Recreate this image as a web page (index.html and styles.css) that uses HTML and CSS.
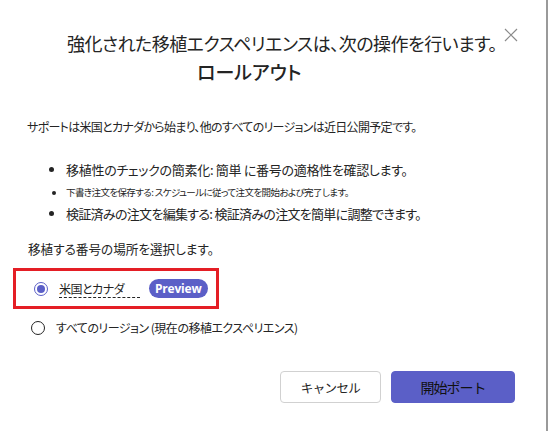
FILE: index.html
```html
<!DOCTYPE html>
<html lang="ja">
<head>
    <meta charset="utf-8" />
    <title>ロールアウト</title>
    <link rel="stylesheet" href="styles.css">
</head>
<body>
    <div class="dialog">
        <button class="close" aria-label="閉じる">
            <svg width="14" height="14" viewBox="0 0 14 14">
                <path d="M1 1 L13 13 M13 1 L1 13" stroke="#8a8a8a" stroke-width="1.2" fill="none" />
            </svg>
        </button>

        <h1 class="title">
            <span class="title-line">強化された移植エクスペリエンスは、次の操作を行います。</span>
            <span class="title-line title-line-2">ロールアウト</span>
        </h1>

        <p class="intro">サポートは米国とカナダから始まり、他のすべてのリージョンは近日公開予定です。</p>

        <ul class="features">
            <li class="large">移植性のチェックの簡素化: 簡単 に番号の適格性を確認します。</li>
            <li class="small">下書き注文を保存する: スケジュールに従って注文を開始および完了します。</li>
            <li class="medium">検証済みの注文を編集する: 検証済みの注文を簡単に調整できます。</li>
        </ul>

        <p class="prompt">移植する番号の場所を選択します。</p>

        <div class="options">
            <label class="option option-highlight">
                <span class="radio radio-checked"></span>
                <span class="option-label dashed">米国とカナダ</span>
                <span class="badge">Preview</span>
            </label>
            <label class="option">
                <span class="radio"></span>
                <span class="option-label">すべてのリージョン (現在の移植エクスペリエンス)</span>
            </label>
        </div>

        <div class="actions">
            <button class="btn">キャンセル</button>
            <button class="btn btn-primary">開始ポート</button>
        </div>
    </div>
</body>
</html>
```

FILE: styles.css
```css
body {
    margin: 0;
    background-color: #fff;
    font-family: "Noto Sans CJK JP", sans-serif;
    font-feature-settings: "palt";
    color: #242424;
}

.dialog {
    position: relative;
    width: 546px;
    height: 431px;
    border-right: 2px solid #9a9a9a;
    box-sizing: content-box;
}

.close {
    position: absolute;
    top: 28px;
    left: 504px;
    padding: 0;
    border: none;
    background: none;
    width: 14px;
    height: 14px;
}

.title {
    margin: 0;
    padding-top: 29px;
    font-weight: normal;
    display: flex;
    flex-direction: column;
}

.title-line {
    font-size: 18px;
    letter-spacing: -0.5px;
    line-height: 28px;
    padding-left: 67px;
}

.title-line-2 {
    padding-left: 197px;
    font-size: 19px;
    font-weight: 500;
    letter-spacing: 0;
    line-height: 30px;
}

.intro {
    margin: 30px 0 0 27px;
    font-size: 12px;
    letter-spacing: -0.7px;
    line-height: 20px;
}

.features {
    margin: 22px 0 0 0;
    padding: 0 0 0 66px;
}

.features li {
    line-height: 22px;
}

.features li.large {
    font-size: 13px;
    letter-spacing: -0.3px;
}

.features li.small {
    font-size: 9.5px;
    letter-spacing: -0.6px;
}

.features li.medium {
    font-size: 13px;
    letter-spacing: -0.7px;
}

.prompt {
    margin: 14px 0 0 28px;
    font-size: 12.6px;
    line-height: 20px;
}

.options {
    display: flex;
    flex-direction: column;
    margin-top: 10px;
}

.option {
    display: flex;
    align-items: center;
    gap: 11px;
    font-size: 12px;
    letter-spacing: -0.5px;
    height: 38px;
    padding-left: 31px;
}

.option-highlight {
    width: 206px;
    height: 41px;
    margin-top: -1px;
    margin-left: 13px;
    padding-left: 18px;
    border: 3.5px solid #e41e25;
    box-sizing: border-box;
}

.radio {
    width: 14px;
    height: 14px;
    border: 1px solid #242424;
    border-radius: 50%;
    box-sizing: border-box;
    flex-shrink: 0;
    position: relative;
}

.radio-checked {
    border-color: #5b5fc7;
}

.radio-checked::after {
    content: '';
    position: absolute;
    left: 2px;
    top: 2px;
    width: 8px;
    height: 8px;
    border-radius: 50%;
    background-color: #5b5fc7;
}

.option-label {
    line-height: 16px;
}

.dashed {
    width: 81px;
    border-bottom: 1px dashed #242424;
    margin-top: 2px;
}

.badge {
    margin-left: -2px;
    padding: 0 6px;
    height: 19px;
    line-height: 19px;
    border-radius: 10px;
    background-color: #5b5fc7;
    color: #fff;
    font-family: "Open Sans", sans-serif;
    font-size: 12px;
    font-weight: 700;
    letter-spacing: -0.2px;
}

.actions {
    display: flex;
    gap: 10px;
    margin: 24px 0 0 280px;
}

.btn {
    width: 101px;
    height: 32px;
    border: 1px solid #d1d1d1;
    border-radius: 4px;
    background-color: #fff;
    font-family: "Noto Sans CJK JP", sans-serif;
    font-size: 12.5px;
    letter-spacing: -0.6px;
    color: #242424;
    padding: 0;
}

.btn-primary {
    width: 124px;
    border-color: #5b5fc7;
    background-color: #5b5fc7;
    color: #111;
    font-size: 14px;
    letter-spacing: -1px;
}
```
